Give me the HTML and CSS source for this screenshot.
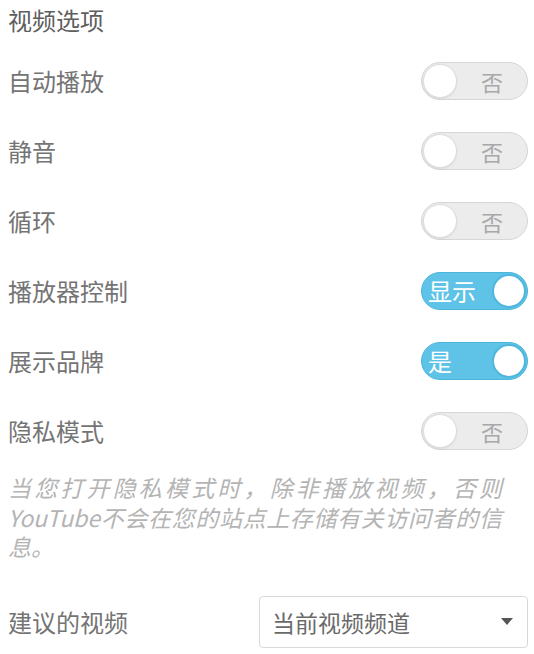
FILE: index.html
```html
<!DOCTYPE html>
<html lang="zh-CN">
<head>
  <meta charset="UTF-8">
  <meta name="viewport" content="width=device-width, initial-scale=1">
  <title>视频选项</title>
  <link rel="stylesheet" href="styles.css">
</head>
<body>
  <div class="panel">
    <h2 class="panel-title">视频选项</h2>

    <!-- Toggle rows -->
    <div class="option-list">
      <div class="option-row">
        <span class="option-label">自动播放</span>
        <div class="toggle off"><span class="knob"></span><span class="toggle-text">否</span></div>
      </div>
      <div class="option-row">
        <span class="option-label">静音</span>
        <div class="toggle off"><span class="knob"></span><span class="toggle-text">否</span></div>
      </div>
      <div class="option-row">
        <span class="option-label">循环</span>
        <div class="toggle off"><span class="knob"></span><span class="toggle-text">否</span></div>
      </div>
      <div class="option-row">
        <span class="option-label">播放器控制</span>
        <div class="toggle on"><span class="toggle-text">显示</span><span class="knob"></span></div>
      </div>
      <div class="option-row">
        <span class="option-label">展示品牌</span>
        <div class="toggle on"><span class="toggle-text">是</span><span class="knob"></span></div>
      </div>
      <div class="option-row">
        <span class="option-label">隐私模式</span>
        <div class="toggle off"><span class="knob"></span><span class="toggle-text">否</span></div>
      </div>
    </div>

    <p class="hint">当您打开隐私模式时，除非播放视频，否则YouTube不会在您的站点上存储有关访问者的信息。</p>

    <!-- Suggested videos select -->
    <div class="select-row">
      <span class="option-label">建议的视频</span>
      <div class="select">
        <span class="select-value">当前视频频道</span>
        <svg class="caret" width="12" height="7" viewBox="0 0 12 7"><path d="M0 0 L12 0 L6 7 Z" fill="#555"/></svg>
      </div>
    </div>
  </div>
</body>
</html>
```

FILE: styles.css
```css
/* General Styles */
* {
  margin: 0;
  padding: 0;
  box-sizing: border-box;
  font-family: "Noto Sans CJK SC", "Noto Sans", sans-serif;
}

body {
  background-color: #ffffff;
  color: #707070;
}

.panel {
  padding: 0 6px 0 8px;
}

.panel-title {
  font-size: 24px;
  font-weight: 400;
  color: #5e5e5e;
  line-height: 40px;
  margin-bottom: 22px;
}

/* Option rows */
.option-list {
  display: flex;
  flex-direction: column;
  gap: 32px;
}

.option-row {
  display: flex;
  justify-content: space-between;
  align-items: center;
  height: 38px;
}

.option-label {
  font-size: 24px;
  line-height: 38px;
  color: #747474;
}

/* Toggle Switch */
.toggle {
  width: 107px;
  height: 38px;
  border-radius: 19px;
  padding: 1px;
  display: flex;
  align-items: center;
  justify-content: space-between;
  border: 1px solid #d6d6d6;
}

.toggle .knob {
  width: 34px;
  height: 34px;
  border-radius: 50%;
  background: #ffffff;
}

.toggle-text {
  font-size: 22px;
  line-height: 34px;
}

.toggle.off {
  background: #ececec;
}

.toggle.off .knob {
  border: 1px solid #dcdcdc;
  box-shadow: 0 1px 2px rgba(0, 0, 0, 0.08);
}

.toggle.off .toggle-text {
  color: #a8a8a8;
  padding-right: 23px;
}

.toggle.on {
  background: #5ec3e6;
  border-color: #4cb5dc;
}

.toggle.on .knob {
  border: 2px solid #4fb6dd;
}

.toggle.on .toggle-text {
  color: #ffffff;
  font-size: 24px;
  padding-left: 5px;
}

/* Hint text */
.hint {
  margin-top: 23px;
  width: 494px;
  font-size: 23px;
  line-height: 29.5px;
  font-style: italic;
  color: #b4b4b4;
  text-align: justify;
}

/* Select */
.select-row {
  margin-top: 34px;
  display: flex;
  justify-content: space-between;
  align-items: center;
}

.select {
  width: 269px;
  height: 52px;
  border: 1px solid #d9d9d9;
  border-radius: 4px;
  display: flex;
  align-items: center;
  justify-content: space-between;
  padding: 0 14px 0 12px;
}

.select-value {
  font-size: 23px;
  color: #6a6a6a;
}
```
